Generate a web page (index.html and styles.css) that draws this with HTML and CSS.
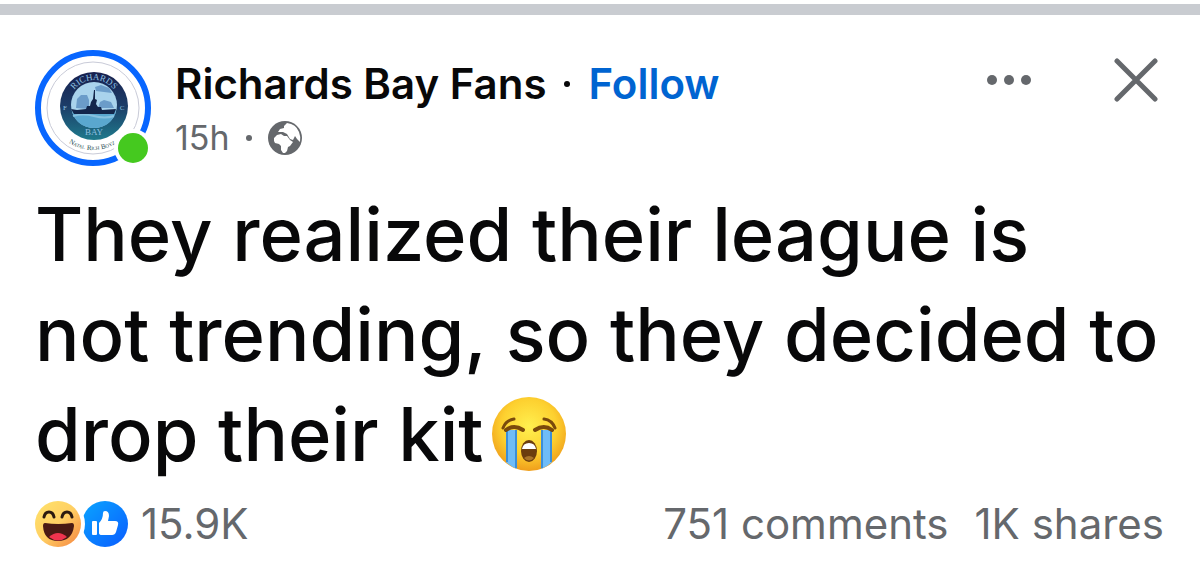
FILE: index.html
```html
<!DOCTYPE html>
<html lang="en">
<head>
  <meta charset="UTF-8">
  <meta name="viewport" content="width=device-width, initial-scale=1.0">
  <title>Richards Bay Fans</title>
  <link rel="stylesheet" href="styles.css">
</head>
<body>
  <div class="divider"></div>

  <article class="post">
    <header class="post-header">
      <svg class="avatar" viewBox="0 0 116 116" role="img" aria-label="Richards Bay FC">
        <defs>
          <linearGradient id="badge" x1="0" y1="0" x2="0" y2="1">
            <stop offset="0" stop-color="#17204e"/>
            <stop offset="0.5" stop-color="#1c3d68"/>
            <stop offset="1" stop-color="#1f7a8c"/>
          </linearGradient>
          <path id="arc-top" d="M34 55 A25 25 0 0 1 84 55"/>
          <path id="arc-bottom" d="M17 72 A44 44 0 0 0 99 72"/>
        </defs>
        <circle cx="58" cy="58" r="55" fill="#fff" stroke="#0866ff" stroke-width="6"/>
        <circle cx="58" cy="58" r="46" fill="none" stroke="#c9cbd8" stroke-width="1"/>
        <circle cx="59" cy="56" r="34" fill="url(#badge)"/>
        <circle cx="59" cy="55" r="23" fill="#a9d3ec"/>
        <path d="M41 58l1-9 4-4h6l2 5v9zM60 37l6-2 8 3 3 5-8-1-8-1zM63 58l2-6 4-2 7 2 3 6z" fill="#6b9cc9"/>
        <path d="M37 60h44c-1 10-10 18-22 18s-21-8-22-18z" fill="#5aa7cf"/>
        <path d="M38 66q10 -3 21 0t20 0" fill="none" stroke="#86c1e0" stroke-width="2"/>
        <path d="M36 59l6 1 9-1 1-3h3l1-4 2-3 1-9h1v9l2 1-1 4 2 3h3l1 3 14-1-2 5H39z" fill="#13264b"/>
        <text class="badge-text"><textPath href="#arc-top" startOffset="50%">RICHARDS</textPath></text>
        <text class="badge-text" x="59" y="85">BAY</text>
        <text class="badge-side" x="30" y="60">F</text>
        <text class="badge-side" x="87" y="60">C</text>
        <text class="badge-motto"><textPath href="#arc-bottom" startOffset="49%">Natal Rich Boyz</textPath></text>
        <circle cx="98" cy="98" r="19" fill="#fff"/>
        <circle cx="98" cy="98" r="15" fill="#45c91f"/>
      </svg>

      <div class="post-info">
        <div class="author-row">
          <span class="author">Richards Bay Fans</span>
          <span class="dot"></span>
          <button class="follow">Follow</button>
        </div>
        <div class="meta-row">
          <span>15h</span>
          <span class="dot"></span>
          <svg class="globe" viewBox="0 0 34 34" role="img" aria-label="Public">
            <circle cx="17" cy="17" r="17" fill="#65686c"/>
            <path d="M16 5l3-3q9 1 12 9 2 5 1 10l-3-3-2-3-2 4-3-1-3-5-4-2-5 0 2-3 4-1z" fill="#fff"/>
            <path d="M6 17l3-3 4-1 3 2 3 0 3 4 3 2-3 4-2 1-1 4-2 2h-2l-2-3v-4l-2-2-4-1-1-2z" fill="#fff"/>
          </svg>
        </div>
      </div>

      <div class="post-actions">
        <button class="icon-button" aria-label="More">
          <svg class="more-icon" viewBox="0 0 46 12">
            <circle cx="6" cy="6" r="5"/>
            <circle cx="23" cy="6" r="5"/>
            <circle cx="40" cy="6" r="5"/>
          </svg>
        </button>
        <button class="icon-button" aria-label="Close">
          <svg class="close-icon" viewBox="0 0 44 44">
            <path d="M3 3l38 38M41 3L3 41"/>
          </svg>
        </button>
      </div>
    </header>

    <p class="post-text">They realized their league is<br>not trending, so they decided to drop their kit<svg class="emoji" viewBox="0 0 74 74" role="img" aria-label="Loudly crying">
      <defs>
        <radialGradient id="face" cx="0.5" cy="0.4" r="0.62">
          <stop offset="0" stop-color="#fff04f"/>
          <stop offset="0.6" stop-color="#fdd02f"/>
          <stop offset="1" stop-color="#ee9a1a"/>
        </radialGradient>
      </defs>
      <circle cx="37" cy="37" r="37" fill="url(#face)"/>
      <path d="M14 33h11v39q-6-2-11-7zM49 33h11v32q-5 5-11 7z" fill="#6fbcf7"/>
      <path d="M15 33v32M24 33v38M50 33v38M59 33v32" fill="none" stroke="#3b8ed8" stroke-width="2"/>
      <path d="M11 31Q14 23 22 22M63 31Q60 23 52 22" fill="none" stroke="#7a4a0c" stroke-width="3" stroke-linecap="round"/>
      <path d="M14 33q8-6 17 0M43 33q9-6 17 0" fill="none" stroke="#7a4a0c" stroke-width="4" stroke-linecap="round"/>
      <ellipse cx="37" cy="54" rx="8" ry="11" fill="#6b3d0e"/>
      <path d="M30 52q1-6 7-6t7 6z" fill="#fff"/>
      <path d="M32 61q5-4 10 0-5 5-10 0z" fill="#a8742a"/>
    </svg></p>

    <footer class="post-stats">
      <button class="reactions">
        <svg class="reaction-icons" viewBox="0 0 94 48" aria-hidden="true">
          <defs>
            <linearGradient id="haha" x1="0" y1="0" x2="1" y2="1">
              <stop offset="0" stop-color="#ffe36b"/>
              <stop offset="0.5" stop-color="#ffcf63"/>
              <stop offset="1" stop-color="#f5813f"/>
            </linearGradient>
            <linearGradient id="like" x1="0" y1="0" x2="1" y2="1">
              <stop offset="0" stop-color="#0aa5ff"/>
              <stop offset="1" stop-color="#0a5cff"/>
            </linearGradient>
          </defs>
          <circle cx="70" cy="24" r="23" fill="url(#like)"/>
          <circle cx="23" cy="24" r="27" fill="#fff"/>
          <circle cx="23" cy="24" r="23" fill="url(#haha)"/>
          <path d="M9 17q1-5 5-5t5 5M27 17q1-5 5-5t5 5" fill="none" stroke="#2b1a10" stroke-width="3" stroke-linecap="round"/>
          <path d="M10 23q13 2 27 0 2 0 2 3-2 15-16 15T8 26q0-3 2-3z" fill="#4a1a14"/>
          <path d="M14 37q9-8 18 0-9 7-18 0z" fill="#f0344f"/>
          <path d="M58 21h3q1 0 1 1v12q0 1-1 1h-3q-1 0-1-1V22q0-1 1-1z" fill="#fff"/>
          <path d="M64 23q4-4 4-10 0-2 2-2 4 0 4 5l-1 5h7q4 0 3 4l-2 7q-1 3-4 3H67q-3 0-3-2z" fill="#fff"/>
        </svg>
        <span>15.9K</span>
      </button>
      <div class="counts">
        <a href="#comments">751 comments</a>
        <a href="#shares">1K shares</a>
      </div>
    </footer>
  </article>
</body>
</html>
```
FILE: styles.css
```css
* {
  box-sizing: border-box;
}

body {
  margin: 0;
  padding-top: 4px;
  background-color: #fff;
  color: #080809;
  font-family: Inter, Roboto, "Liberation Sans", sans-serif;
}

button {
  padding: 0;
  border: none;
  background: none;
  font: inherit;
  cursor: pointer;
}

svg {
  display: block;
}

.divider {
  height: 11px;
  background-color: #c9ccd1;
}

.post {
  padding: 35px 36px 24px 35px;
}

.post-header {
  display: flex;
  align-items: flex-start;
}

.avatar {
  width: 116px;
  height: 116px;
  flex-shrink: 0;
}

.badge-text,
.badge-side,
.badge-motto {
  font-family: "Liberation Serif", serif;
  text-anchor: middle;
}

.badge-text {
  font-size: 9px;
  fill: #8fc0e0;
}

.badge-side {
  font-size: 7px;
  fill: #8fc0e0;
}

.badge-motto {
  font-size: 7px;
  font-variant: small-caps;
  fill: #1d4a50;
}

.post-info {
  flex: 1;
  margin-left: 24px;
  padding-top: 8px;
}

.author-row,
.meta-row {
  display: flex;
  align-items: center;
}

.author-row {
  gap: 18px;
  font-size: 42px;
  line-height: 52px;
  font-weight: 600;
}

.follow {
  color: #0064d1;
}

.dot {
  width: 6px;
  height: 6px;
  border-radius: 50%;
  background-color: currentColor;
}

.meta-row {
  gap: 16px;
  margin-top: 8px;
  color: #65686c;
  font-size: 34px;
  line-height: 40px;
}

.globe {
  width: 34px;
  height: 34px;
}

.post-actions {
  display: flex;
  align-items: center;
  gap: 82px;
  padding: 8px 6px 0 0;
}

.more-icon {
  width: 46px;
  height: 12px;
  fill: #65686c;
}

.close-icon {
  width: 44px;
  height: 44px;
  fill: none;
  stroke: #65686c;
  stroke-width: 5;
  stroke-linecap: round;
}

.post-text {
  margin: 18px 0 0;
  font-size: 74px;
  line-height: 100px;
  font-weight: 500;
}

.emoji {
  display: inline-block;
  width: 74px;
  height: 74px;
  margin-left: 8px;
  vertical-align: -10px;
}

.post-stats {
  display: flex;
  align-items: center;
  justify-content: space-between;
  margin-top: 14px;
  color: #65686c;
  font-size: 42px;
  line-height: 52px;
}

.reactions {
  display: flex;
  align-items: center;
  gap: 12px;
  color: inherit;
}

.reaction-icons {
  width: 94px;
  height: 48px;
}

.counts {
  display: flex;
  gap: 26px;
}

.counts a {
  color: inherit;
  text-decoration: none;
}
```
